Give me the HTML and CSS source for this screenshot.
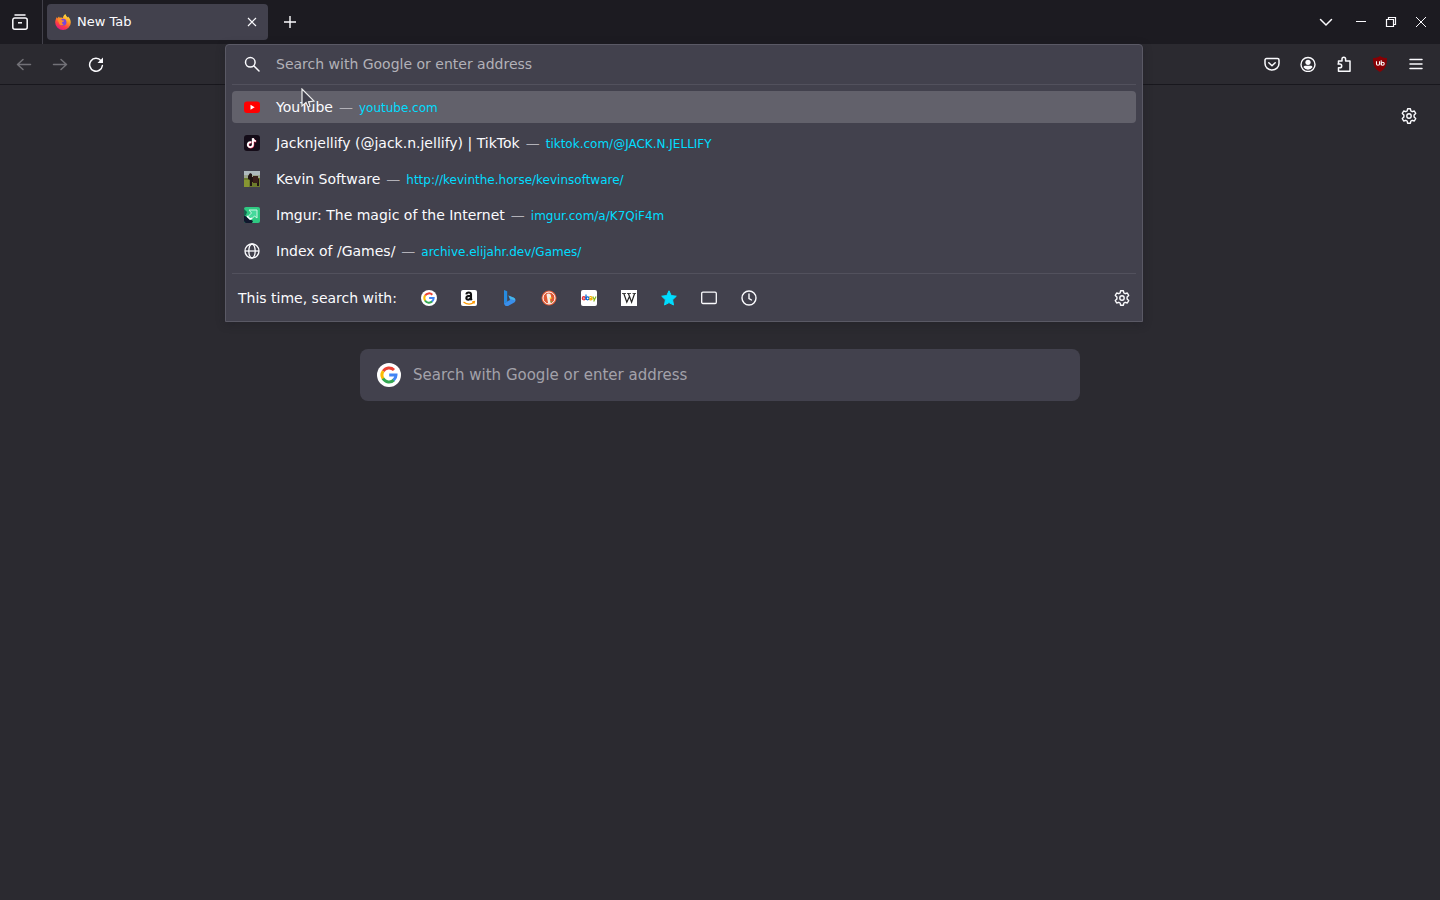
FILE: index.html
```html
<!DOCTYPE html>
<html lang="en">
<head>
<meta charset="utf-8">
<title>New Tab</title>
<link rel="stylesheet" href="styles.css">
</head>
<body>
<svg class="defs" aria-hidden="true">
  <symbol id="google" viewBox="0 0 24 24">
    <circle cx="12" cy="12" r="12" fill="#fff"/>
    <g fill="none" stroke-width="3">
      <path d="M6.2 8.3A7 7 0 0 1 17 7" stroke="#ea4335"/>
      <path d="M6.2 15.900A7 7 0 0 1 6.200 8.100" stroke="#fbbc05"/>
      <path d="M17 16.900A7 7 0 0 1 6 15.600" stroke="#34a853"/>
      <path d="M12.200 12H19A7 7 0 0 1 16.600 17.200" stroke="#4285f4"/>
    </g>
  </symbol>
  <symbol id="gear" viewBox="0 0 16 16">
    <g fill="none" stroke="currentColor" stroke-width="1.4" stroke-linejoin="round">
      <path d="M6.600 .8h2.800l.5 2.200 1.300.7 2.100-.7 1.400 2.400-1.600 1.500v2.200l1.600 1.500-1.400 2.400-2.100-.7-1.300.7-.5 2.200H6.600l-.5-2.200-1.300-.7-2.100.7-1.400-2.400 1.600-1.500V6.900L1.300 5.400 2.700 3l2.100.7L6.100 3z"/>
      <circle cx="8" cy="8" r="2.200"/>
    </g>
  </symbol>
</svg>

<header class="browser">
  <div class="titlebar">
    <button class="view-button" aria-label="Recent browsing">
      <svg class="icon" viewBox="0 0 16 16" fill="none" stroke="currentColor" stroke-width="1.5"><path d="M3 1h10" stroke-linecap="round"/><path d="M2.800 4h10.400a2 2 0 0 1 2 2v7.200a2 2 0 0 1-2 2H2.800a2 2 0 0 1-2-2V6a2 2 0 0 1 2-2z"/><path d="M6 8.800h4"/></svg>
    </button>
    <div class="tab">
      <svg class="icon" viewBox="0 0 16 16">
        <defs><linearGradient id="fox" x1=".8" y1="0" x2=".3" y2="1"><stop offset="0" stop-color="#fff14a"/><stop offset=".4" stop-color="#ff9822"/><stop offset=".7" stop-color="#ff4040"/><stop offset="1" stop-color="#e31587"/></linearGradient></defs>
        <path d="M10.500 0c.1 1.700 1.400 2.400 2.300 3.500.2-.3.200-.7.200-1 1.600 1.400 2.800 3.600 2.800 6A7.800 7.500 0 0 1 .2 8.500C.2 6.300 1 4.300 2 3l.3 1.400L4 2.500l.6 1.300C6.500 3.300 7.200 3.600 8 4 8 2.400 9 .8 10.500 0z" fill="url(#fox)"/>
        <circle cx="8" cy="8.200" r="3.400" fill="#7a45dc"/>
        <path d="M2.600 5.500c2-.8 3.800-.5 4.700.9 1 .1 1.800 0 2 .4-.1 1-2 1.100-2.300 1.800-.3.900.8 1.700 2 1.500-1.700 2-4.600 1-5-1.200z" fill="#ff8b2c"/>
      </svg>
      <span class="tab-label">New Tab</span>
      <button class="tab-close" aria-label="Close tab"><svg viewBox="0 0 10 10" width="10" height="10" fill="none" stroke="currentColor" stroke-width="1.200"><path d="M1 1l8 8M9 1L1 9"/></svg></button>
    </div>
    <button class="new-tab" aria-label="Open a new tab"><svg viewBox="0 0 14 14" width="14" height="14" fill="none" stroke="currentColor" stroke-width="1.400"><path d="M7 1v12M1 7h12"/></svg></button>
    <div class="window-buttons">
      <button class="list-tabs" aria-label="List all tabs"><svg class="icon" viewBox="0 0 16 16" fill="none" stroke="currentColor" stroke-width="1.500" stroke-linecap="round"><path d="M2.500 5.500L8 11l5.500-5.500"/></svg></button>
      <button aria-label="Minimize"><svg viewBox="0 0 12 12" width="12" height="12" stroke="currentColor"><path d="M1 5.500h10"/></svg></button>
      <button aria-label="Restore"><svg viewBox="0 0 12 12" width="12" height="12" fill="none" stroke="currentColor" stroke-width="1.200"><path d="M1.500 3.500h7v7h-7zM3.500 3.500v-2h7v7h-2"/></svg></button>
      <button aria-label="Close"><svg viewBox="0 0 12 12" width="12" height="12" fill="none" stroke="currentColor"><path d="M1 1l10 10M11 1L1 11"/></svg></button>
    </div>
  </div>

  <div class="toolbar">
    <nav class="tools" aria-label="Navigation">
      <button class="tool" aria-label="Back" disabled><svg class="icon" viewBox="0 0 16 16" fill="none" stroke="currentColor" stroke-width="1.500" stroke-linecap="round" stroke-linejoin="round"><path d="M14.500 8.500h-13M7 3.500l-5.500 5 5.500 5"/></svg></button>
      <button class="tool" aria-label="Forward" disabled><svg class="icon" viewBox="0 0 16 16" fill="none" stroke="currentColor" stroke-width="1.500" stroke-linecap="round" stroke-linejoin="round"><path d="M1.500 8.500h13M9 3.500l5.500 5-5.500 5"/></svg></button>
      <button class="tool" aria-label="Reload"><svg class="icon" viewBox="0 0 16 16" fill="none" stroke="currentColor" stroke-width="1.500" stroke-linecap="round"><path d="M13 4.700A6.400 6.400 0 1 0 14.400 9.500"/><path d="M15 1.500v5.500H9.500z" fill="currentColor" stroke="none"/></svg></button>
    </nav>
    <div class="spacer"></div>
    <div class="urlbar">
      <div class="panel">
        <label class="field">
          <svg class="icon" viewBox="0 0 16 16" fill="none" stroke="currentColor" stroke-width="1.500" stroke-linecap="round"><circle cx="6.300" cy="6.300" r="4.800"/><path d="M10 10l5 5"/></svg>
          <input class="field-input" type="text" placeholder="Search with Google or enter address" aria-label="Search with Google or enter address">
        </label>
        <div class="results">
          <a class="result selected" href="#">
            <svg class="icon" viewBox="0 0 16 16"><rect y="2.500" width="16" height="11.500" rx="3" fill="#f00"/><path d="M6.500 5.800v5l4.200-2.500z" fill="#fff"/></svg>
            <span class="result-text">YouTube<span class="dash">—</span><span class="result-url">youtube.com</span></span>
          </a>
          <a class="result" href="#">
            <svg class="icon" viewBox="0 0 16 16"><rect width="16" height="16" rx="3" fill="#140c18"/><g fill="none" stroke-width="1.900"><path d="M7.200 7.300a2.500 2.500 0 1 0 1.600 2.400V3.200c.2 1.800 1.300 2.700 3 2.900" stroke="#ee3059" transform="translate(.5 .4)"/><path d="M7.200 7.300a2.500 2.500 0 1 0 1.600 2.400V3.200c.2 1.800 1.300 2.700 3 2.900" stroke="#fff"/></g></svg>
            <span class="result-text">Jacknjellify (@jack.n.jellify) | TikTok<span class="dash">—</span><span class="result-url">tiktok.com/@JACK.N.JELLIFY</span></span>
          </a>
          <a class="result" href="#">
            <svg class="icon" viewBox="0 0 16 16"><path fill="#6d7c2d" d="M0 0h16v16H0z"/><path fill="#aeb9bd" d="M0 0h16v4H0z"/><path fill="#9aa48c" d="M0 4h16v3H0z"/><path fill="#879632" d="M0 9h5v7H0z"/><path fill="#211514" d="M4 5l2-3 2 1v3h5l2 2v7h-2v-4H8v4H6V9L4 8z"/><path fill="#3a1f1a" d="M9 5h5v7H9z"/></svg>
            <span class="result-text">Kevin Software<span class="dash">—</span><span class="result-url">http://kevinthe.horse/kevinsoftware/</span></span>
          </a>
          <a class="result" href="#">
            <svg class="icon" viewBox="0 0 16 16"><rect width="16" height="16" rx="2" fill="#2fc982"/><path d="M0 8l4 3 5 3-1 2H2a2 2 0 0 1-2-2z" fill="#10172d"/><path d="M0 2l3 3-1 3-2 1z" fill="#17664f"/><path d="M5 3h8v8l-2.500-2-4 4-3-3 4-4z" fill="#45d99b" stroke="#c9f5e2"/><path d="M3 9l3 3 2-1" fill="none" stroke="#fff" stroke-width="1.300"/></svg>
            <span class="result-text">Imgur: The magic of the Internet<span class="dash">—</span><span class="result-url">imgur.com/a/K7QiF4m</span></span>
          </a>
          <a class="result" href="#">
            <svg class="icon" viewBox="0 0 16 16" fill="none" stroke="currentColor" stroke-width="1.300"><circle cx="8" cy="8" r="7"/><ellipse cx="8" cy="8" rx="3.200" ry="7"/><path d="M1 8h14"/></svg>
            <span class="result-text">Index of /Games/<span class="dash">—</span><span class="result-url">archive.elijahr.dev/Games/</span></span>
          </a>
        </div>
        <div class="engines">
          <span class="engines-label">This time, search with:</span>
          <button class="engine" aria-label="Google"><svg class="icon"><use href="#google"/></svg></button>
          <button class="engine" aria-label="Amazon"><svg class="icon" viewBox="0 0 16 16"><rect width="16" height="16" rx="2" fill="#fff"/><path d="M5.300 4.400C5.600 2 10 1.600 10 4.500v4c0 .8.300 1 .8 1.600M9.800 5.800C7 5.700 5.200 6.400 5.300 8.200c.2 2.300 3.800 2 4.500-.7" fill="none" stroke="#111" stroke-width="2.100"/><path d="M2.500 12c3.500 2.600 7.500 2.500 10.500.5M11.200 11.800l2.300-.3-.5 2.200" fill="none" stroke="#f90" stroke-width="1.200"/></svg></button>
          <button class="engine" aria-label="Bing"><svg class="icon" viewBox="0 0 16 16"><path d="M3 0l3.200 1.200v10.300L3 14z" fill="#268be0"/><path d="M3 13.500l4-2.500 2-1-1.500-4.500 6 2.500c2.500 2.500 0 4.500-1.500 5.200L7 16c-2 .6-3.600-.6-4-2.500z" fill="#3a8eea"/><path d="M7.300 5.500l5.500 2.300c1 .6 1.300 1.500 1.200 2.700L9.500 9z" fill="#45b6e8"/></svg></button>
          <button class="engine" aria-label="DuckDuckGo"><svg class="icon" viewBox="0 0 16 16"><circle cx="8" cy="8" r="7.500" fill="#de5833"/><circle cx="8" cy="8" r="6" fill="none" stroke="#fff" stroke-width="1"/><path d="M5.500 4.500C6.500 3 9.800 3.300 10 6l.2 2.500-1.200 1 .8 4-2.600.3z" fill="#f4ece4"/><path d="M8.500 7.500l3 .3-2.600 1.500z" fill="#fdd20a"/><path d="M9 11l2 .2-.3 1.600z" fill="#65bc46"/></svg></button>
          <button class="engine" aria-label="eBay"><svg class="icon" viewBox="0 0 16 16"><rect width="16" height="16" rx="2" fill="#fff"/><g fill="none" stroke-width="1.200"><path d="M1.300 8h3c0-2-3-2-3 .2 0 1.900 2 2 2.900 1" stroke="#e53238"/><path d="M5 4.500V10" stroke="#0064d2"/><circle cx="6.600" cy="8.300" r="1.500" stroke="#0064d2"/><path d="M11 10V7.800C11 6 8.600 6.400 8.500 7.300M11 8.300c-1.500 0-2.600.2-2.500 1 .1 1 2.100.8 2.500-.3" stroke="#f5af02"/><path d="M11.800 6.500l1.500 3.200M15 6.500L12.700 11.500" stroke="#86b817"/></g></svg></button>
          <button class="engine" aria-label="Wikipedia"><svg class="icon" viewBox="0 0 16 16"><path fill="#fff" d="M0 0h16v16H0z"/><path d="M1 3.500h4M6 3.500h4M11.500 3.500H15" stroke="#222" stroke-width=".8"/><path d="M2.800 3.500l3 8.700L8.700 6M7.400 3.500l3.200 8.700 3-8.700" fill="none" stroke="#222" stroke-width="1.200"/></svg></button>
          <button class="engine bookmark" aria-label="Bookmarks"><svg class="icon" viewBox="0 0 16 16"><path d="M8 .8l2.200 4.700 5.100.7-3.700 3.600.9 5.200L8 12.600 3.500 15l.9-5.200L.7 6.200l5.100-.7z" fill="currentColor" stroke="currentColor" stroke-linejoin="round"/></svg></button>
          <button class="engine" aria-label="Tabs"><svg class="icon" viewBox="0 0 16 16" fill="none" stroke="currentColor" stroke-width="1.300"><rect x=".7" y="2.200" width="14.600" height="11.300" rx="1.200"/></svg></button>
          <button class="engine" aria-label="History"><svg class="icon" viewBox="0 0 16 16" fill="none" stroke="currentColor" stroke-width="1.400" stroke-linecap="round"><circle cx="8" cy="8" r="7"/><path d="M8 4v4.500l2.500 1.500"/></svg></button>
          <button class="engine engine-settings" aria-label="Search settings"><svg class="icon"><use href="#gear"/></svg></button>
        </div>
        <svg class="pointer" viewBox="0 0 14 21" aria-hidden="true"><path d="M1 1v17l4-3.500 2 4.500 2-1-1.500-4.200 5.500-.8z" fill="#42414d" stroke="#eee" stroke-width="1.200"/></svg>
      </div>
    </div>
    <div class="spacer"></div>
    <div class="tools">
      <button class="tool" aria-label="Save to Pocket"><svg class="icon" viewBox="0 0 16 16" fill="none" stroke="currentColor" stroke-width="1.500" stroke-linecap="round" stroke-linejoin="round"><path d="M2.500 2.500h11A1.500 1.500 0 0 1 15 4v3.500a7 6.500 0 0 1-14 0V4a1.500 1.500 0 0 1 1.500-1.500z"/><path d="M4.800 6.800L8 9.800l3.200-3"/></svg></button>
      <button class="tool" aria-label="Account"><svg class="icon" viewBox="0 0 16 16"><circle cx="8" cy="8.500" r="7" fill="none" stroke="currentColor" stroke-width="1.400"/><circle cx="8" cy="6.300" r="2.600" fill="currentColor"/><path d="M3.500 11.300c.3-1.200 1-1.600 2-1.600h5c1 0 1.700.4 2 1.600A5.400 5.400 0 0 1 8 13.700a5.400 5.400 0 0 1-4.500-2.400z" fill="currentColor"/></svg></button>
      <button class="tool" aria-label="Extensions"><svg class="icon" viewBox="0 0 16 16" fill="none" stroke="currentColor" stroke-width="1.500" stroke-linejoin="round"><path d="M2.500 7.500V5H6V3a1.800 1.800 0 0 1 3.600 0v2h4.400v10.200H2.500v-3.400h1.300a1.900 1.900 0 0 0 0-3.800H1.500"/></svg></button>
      <button class="tool" aria-label="uBlock Origin"><svg class="icon" viewBox="0 0 16 16"><path d="M8 0c2 1.500 4.300 2 7 2 0 7-1.500 11-7 14C2.500 13 1 9 1 2c2.700 0 5-.5 7-2z" fill="#860004"/><path d="M4.500 5.300v2.800c0 1.600 3 1.600 3 0V5.300M9.200 4.300v5" fill="none" stroke="#fff" stroke-width="1.100"/><circle cx="10.700" cy="7.700" r="1.500" fill="none" stroke="#fff" stroke-width="1.100"/></svg></button>
      <button class="tool" aria-label="Application menu"><svg class="icon" viewBox="0 0 16 16" stroke="currentColor" stroke-width="1.500" stroke-linecap="round"><path d="M2 3.500h12M2 8h12M2 12.500h12"/></svg></button>
    </div>
  </div>
</header>

<main class="page">
  <button class="page-settings" aria-label="Personalize new tab"><svg class="icon"><use href="#gear"/></svg></button>
  <label class="search">
    <svg class="search-logo"><use href="#google"/></svg>
    <input class="search-input" type="text" placeholder="Search with Google or enter address" aria-label="Search the web">
  </label>
</main>
</body>
</html>
```
FILE: styles.css
```css
* { box-sizing: border-box; }

body {
  margin: 0;
  min-height: 100vh;
  display: flex;
  flex-direction: column;
  background: #2b2a30;
  color: #fbfbfe;
  font: 14px/20px "DejaVu Sans", sans-serif;
}

button {
  display: flex;
  align-items: center;
  justify-content: center;
  padding: 0;
  border: 0;
  background: none;
  color: inherit;
  font: inherit;
}

input {
  flex: 1;
  min-width: 0;
  padding: 0;
  border: 0;
  outline: 0;
  background: none;
  color: inherit;
  font: inherit;
}

.defs { position: absolute; width: 0; height: 0; }
.icon { flex: none; width: 16px; height: 16px; }

.titlebar {
  display: flex;
  align-items: center;
  height: 44px;
  padding-right: 4px;
  background: #1c1b21;
}

.view-button {
  width: 43px;
  height: 44px;
  padding-right: 2px;
  border-right: 1px solid #42414a;
}

.tab {
  display: flex;
  align-items: center;
  gap: 6px;
  width: 221px;
  height: 36px;
  margin-left: 4px;
  padding: 0 4px 0 8px;
  border-radius: 4px;
  background: #42414d;
}

.tab-label { flex: 1; font-size: 13px; }
.tab-close { width: 24px; height: 24px; }
.new-tab { width: 36px; height: 36px; margin-left: 4px; }

.window-buttons { display: flex; margin-left: auto; }
.window-buttons button { width: 30px; height: 36px; }
.window-buttons .list-tabs { width: 40px; }

.toolbar {
  display: flex;
  align-items: center;
  height: 41px;
  padding: 0 6px;
  border-bottom: 1px solid #18171d;
  background: #2b2a30;
}

.tools { display: flex; }
.tool { width: 36px; height: 36px; }
.tool:disabled { color: #727177; }
.spacer { flex: 0 1 111px; }

.urlbar {
  position: relative;
  flex: 1;
  align-self: stretch;
}

.panel {
  position: absolute;
  z-index: 1;
  top: 0;
  left: 0;
  right: 0;
  border: 1px solid #5a5965;
  border-radius: 4px 4px 0 0;
  background: #42414d;
  box-shadow: 0 2px 8px #1c1b2266;
}

.field {
  display: flex;
  align-items: center;
  gap: 16px;
  height: 39px;
  padding: 0 18px 2px;
}

.field-input::placeholder { color: #b2b1b8; opacity: 1; }

.results {
  display: flex;
  flex-direction: column;
  gap: 4px;
  margin: 0 6px;
  padding: 6px 0;
  border: solid #52515d;
  border-width: 1px 0;
}

.result {
  display: flex;
  align-items: center;
  gap: 16px;
  height: 32px;
  padding: 0 12px;
  border-radius: 4px;
  color: inherit;
  text-decoration: none;
  white-space: nowrap;
}

.selected { background: #62616b; }
.dash { margin: 0 6px; color: #b2b1b8; }
.result-url { color: #00ddff; font-size: 12px; }

.engines {
  display: flex;
  align-items: center;
  height: 47px;
  padding-left: 12px;
}

.engines-label { margin-right: 12px; }
.engine { width: 40px; height: 32px; }
.bookmark { color: #00ddff; }
.engine-settings { margin-left: auto; }

.pointer {
  position: absolute;
  top: 43px;
  left: 75px;
  width: 14px;
  height: 21px;
}

.page {
  flex: 1;
  display: flex;
  flex-direction: column;
  align-items: center;
  gap: 217px;
  padding: 15px;
}

.page-settings { align-self: flex-end; width: 32px; height: 32px; }

.search {
  display: flex;
  align-items: center;
  gap: 12px;
  width: 100%;
  max-width: 720px;
  height: 52px;
  padding: 0 17px;
  border-radius: 8px;
  background: #42414d;
  font-size: 15px;
}

.search-logo { flex: none; width: 24px; height: 24px; }
.search-input::placeholder { color: #a3a2aa; opacity: 1; }
```
